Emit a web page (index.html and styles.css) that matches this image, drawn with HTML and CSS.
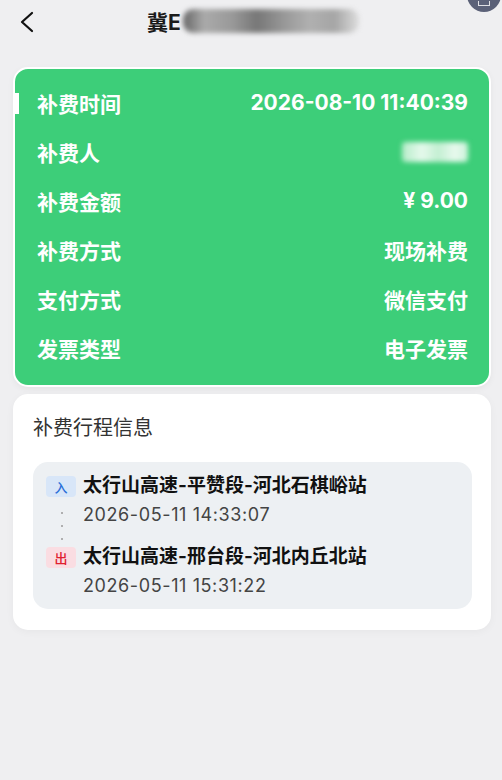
FILE: index.html
```html
<!DOCTYPE html>
<html lang="zh-CN">
<head>
  <meta charset="UTF-8" />
  <meta name="viewport" content="width=device-width, initial-scale=1.0"/>
  <title>补费详情</title>

  <link rel="stylesheet" href="styles.css">
</head>
<body>
  <div class="float-btn"><span class="float-icon"></span></div>

  <header class="nav">
    <button class="back" aria-label="返回">
      <svg width="14" height="22" viewBox="0 0 14 22">
        <polyline points="12,2 2,11 12,20" fill="none" stroke="#111" stroke-width="2.2" stroke-linecap="round" stroke-linejoin="round"/>
      </svg>
    </button>
    <h1 class="title">冀E<span class="blur plate"></span></h1>
  </header>

  <main class="content">
    <section class="pay-card">
      <span class="marker"></span>
      <div class="row"><span>补费时间</span><span class="num">2026-08-10 11:40:39</span></div>
      <div class="row"><span>补费人</span><span class="blur name"></span></div>
      <div class="row"><span>补费金额</span><span class="num">¥ 9.00</span></div>
      <div class="row"><span>补费方式</span><span>现场补费</span></div>
      <div class="row"><span>支付方式</span><span>微信支付</span></div>
      <div class="row"><span>发票类型</span><span>电子发票</span></div>
    </section>

    <section class="trip-card">
      <h2 class="trip-title">补费行程信息</h2>
      <div class="trip">
        <div class="stop">
          <div class="stop-side">
            <span class="tag tag-in">入</span>
            <div class="dots"><i></i><i></i><i></i></div>
          </div>
          <div class="stop-info">
            <div class="station">太行山高速-平赞段-河北石棋峪站</div>
            <div class="time">2026-05-11 14:33:07</div>
          </div>
        </div>
        <div class="stop">
          <div class="stop-side">
            <span class="tag tag-out">出</span>
          </div>
          <div class="stop-info">
            <div class="station">太行山高速-邢台段-河北内丘北站</div>
            <div class="time">2026-05-11 15:31:22</div>
          </div>
        </div>
      </div>
    </section>
  </main>
</body>
</html>
```

FILE: styles.css
```css
* {
  box-sizing: border-box;
  margin: 0;
  padding: 0;
}

body {
  background-color: #efeff1;
  font-family: Inter, "Noto Sans CJK SC", sans-serif;
  color: #222;
  width: 502px;
  height: 780px;
  overflow: hidden;
  position: relative;
}

.float-btn {
  position: absolute;
  right: 1px;
  top: -22px;
  width: 34px;
  height: 34px;
  border-radius: 50%;
  background-color: #5b6178;
}

.float-icon {
  position: absolute;
  left: 11px;
  bottom: 6px;
  width: 12px;
  height: 5px;
  border: 1.5px solid #fff;
  border-top: none;
  opacity: 0.8;
}

.nav {
  height: 44px;
  display: flex;
  align-items: center;
  padding: 0 0 3px 20px;
}

.back {
  border: none;
  background: none;
  width: 14px;
  height: 22px;
  display: flex;
  margin-top: 2px;
}

.title {
  margin-left: 113px;
  font-size: 21px;
  font-weight: 700;
  color: #1a1a1a;
  display: flex;
  align-items: center;
}

.blur {
  display: inline-block;
  filter: blur(2.5px);
}

.plate {
  width: 176px;
  height: 24px;
  margin-left: 2px;
  background: linear-gradient(90deg, #666 0%, #aaa 12%, #999 28%, #777 42%, #999 58%, #b0b0b0 72%, #a5a5a5 86%, #ddd 100%);
  border-radius: 10px;
}

.content {
  padding: 23px 11px 0 13px;
  display: flex;
  flex-direction: column;
  gap: 7px;
}

.pay-card {
  position: relative;
  background-color: #3dce79;
  border: 2px solid #fff;
  border-radius: 15px;
  padding: 9px 21px 13px 22px;
  color: #fff;
  box-shadow: 0 2px 6px rgba(0, 0, 0, 0.05);
}

.marker {
  position: absolute;
  left: 0;
  top: 24px;
  width: 4px;
  height: 21px;
  background-color: #fff;
}

.row {
  height: 49px;
  display: flex;
  align-items: center;
  justify-content: space-between;
  font-size: 21px;
  font-weight: 700;
}

.num {
  font-size: 21px;
  font-weight: 700;
}

.name {
  width: 66px;
  height: 20px;
  background: linear-gradient(90deg, #b5ecc9 0%, #e6f9ec 30%, #c3efd2 55%, #e8f9ee 80%, #cdf2da 100%);
  border-radius: 4px;
}

.trip-card {
  background-color: #fff;
  border-radius: 15px;
  padding: 20px 19px 21px 20px;
  box-shadow: 0 2px 8px rgba(0, 0, 0, 0.04);
}

.trip-title {
  font-size: 20px;
  font-weight: 400;
  color: #333;
  line-height: 29px;
}

.trip {
  margin-top: 19px;
  background-color: #edf0f3;
  border-radius: 15px;
  padding: 10px 13px 8px 13px;
  display: flex;
  flex-direction: column;
  gap: 13px;
}

.stop {
  display: flex;
  align-items: flex-start;
  gap: 7px;
}

.stop-side {
  position: relative;
  width: 30px;
}

.tag {
  width: 30px;
  height: 21px;
  margin-top: 4px;
  border-radius: 4px;
  display: flex;
  align-items: center;
  justify-content: center;
  font-size: 13px;
  font-weight: 500;
}

.tag-in {
  background-color: #d8e6f8;
  color: #2b6fd8;
}

.tag-out {
  background-color: #fadde2;
  color: #e0202f;
}

.station {
  font-size: 19px;
  font-weight: 700;
  color: #111;
  line-height: 28px;
}

.time {
  font-size: 18px;
  letter-spacing: 0.6px;
  color: #444;
  line-height: 30px;
}

.dots {
  position: absolute;
  left: 15px;
  top: 40px;
  display: flex;
  flex-direction: column;
  gap: 11px;
}

.dots i {
  width: 2px;
  height: 2px;
  border-radius: 50%;
  background-color: #9a9a9a;
}
```
